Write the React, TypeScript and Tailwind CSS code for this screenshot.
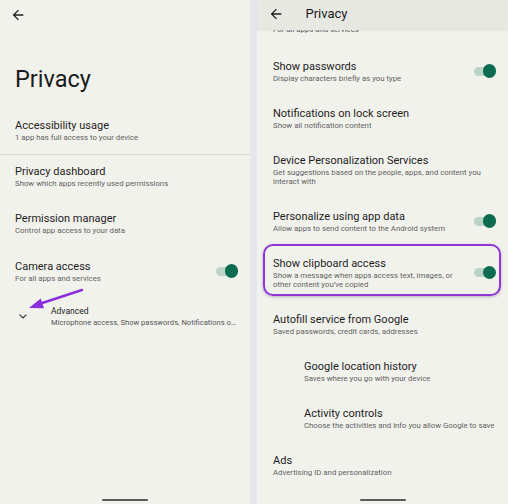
import React from 'react';

const FONT = "font-['Roboto',sans-serif]";

function BackArrow(): JSX.Element {
  return (
    <svg width="16" height="16" viewBox="0 0 24 24" fill="#1f1f1f">
      <path d="M20 11H7.83l5.59-5.59L12 4l-8 8 8 8 1.41-1.41L7.83 13H20v-2z" />
    </svg>
  );
}

function Toggle(): JSX.Element {
  return (
    <div className="relative w-[22px] h-[14px] shrink-0">
      <div className="absolute left-0 top-[2.5px] w-[17px] h-[9px] rounded-full bg-[#bcd3c7]" />
      <div className="absolute right-0 top-0 w-[13.5px] h-[13.5px] rounded-full bg-[#0d6b50]" />
    </div>
  );
}

type RowProps = {
  title: string;
  sub: string[];
  toggle?: boolean;
  className?: string;
  children?: React.ReactNode;
};

function Row({ title, sub, toggle, className = '', children }: RowProps): JSX.Element {
  return (
    <div className={`relative flex items-center pr-[12px] ${className}`}>
      <div className="flex-1 min-w-0">
        <div className="text-[11px] leading-[14px] text-[#1d1d1d]">{title}</div>
        {sub.map((line) => (
          <div key={line} className="text-[7.8px] leading-[9px] text-[#626262] whitespace-nowrap">
            {line}
          </div>
        ))}
      </div>
      {toggle && <Toggle />}
      {children}
    </div>
  );
}

function HomeBar({ className = '' }: { className?: string }): JSX.Element {
  return <div className={`absolute bottom-[3px] h-[2.5px] w-[46px] rounded-full bg-[#5b5b5b] ${className}`} />;
}

function LeftScreen(): JSX.Element {
  return (
    <div className="relative w-[250px] h-[504px] shrink-0 bg-[#f2f2ed] flex flex-col">
      <div className="pt-[6.7px] pl-[10px]">
        <BackArrow />
      </div>
      <div className="mt-[42px] pl-[15px] text-[23.5px] leading-[28px] text-[#1b1b1b]">Privacy</div>

      <Row className="mt-[14.3px] pl-[15px] pt-[12px] pb-[12.4px]" title="Accessibility usage" sub={['1 app has full access to your device']} />
      <div className="h-px bg-[#dadad5]" />
      <Row className="pl-[15px] pt-[9.2px] pb-[12.25px]" title="Privacy dashboard" sub={['Show which apps recently used permissions']} />
      <Row className="pl-[15px] py-[12.25px]" title="Permission manager" sub={['Control app access to your data']} />
      <Row className="pl-[15px] py-[12.25px]" title="Camera access" sub={['For all apps and services']} toggle />

      <div className="mt-[11px] flex items-center">
        <div className="w-[51px] pl-[19px]">
          <svg width="8" height="5" viewBox="0 0 8 5" fill="none" stroke="#333" strokeWidth="1.2">
            <path d="M0.6 0.6 4 4 7.4 0.6" />
          </svg>
        </div>
        <div>
          <div className="text-[8.5px] leading-[10px] text-[#222]">Advanced</div>
          <div className="mt-[2px] text-[7.6px] leading-[9px] text-[#555] whitespace-nowrap">
            Microphone access, Show passwords, Notifications o…
          </div>
        </div>
      </div>

      <svg className="absolute left-0 top-0 pointer-events-none" width="250" height="504">
        <line x1="82" y1="290" x2="40" y2="303.8" stroke="#8a2fdc" strokeWidth="2.5" strokeLinecap="round" />
        <polygon points="29,308 40.7,298.6 44,308.3" fill="#8a2fdc" />
      </svg>

      <HomeBar className="left-[102px]" />
    </div>
  );
}

function RightScreen(): JSX.Element {
  return (
    <div className="relative w-[251px] h-[504px] shrink-0 bg-[#f2f2ed] flex flex-col">
      <div className="h-[30px] shrink-0 bg-[#e8e8e3] flex items-start pt-[5.5px] pl-[11px] shadow-[0_1px_2px_rgba(0,0,0,0.06)] z-10">
        <BackArrow />
        <div className="ml-[21.5px] text-[13px] leading-[16px] text-[#1b1b1b]">Privacy</div>
      </div>

      <div className="flex-1 overflow-hidden flex flex-col">
        <div className="mt-[-5.5px] mb-[14.2px] pl-[16px] text-[7.8px] leading-[9px] text-[#626262]">
          For all apps and services
        </div>
        <Row className="pl-[16px] py-[12px]" title="Show passwords" sub={['Display characters briefly as you type']} toggle />
        <Row className="pl-[16px] py-[12px]" title="Notifications on lock screen" sub={['Show all notification content']} />
        <Row
          className="pl-[16px] py-[12px]"
          title="Device Personalization Services"
          sub={['Get suggestions based on the people, apps, and content you', 'interact with']}
        />
        <Row className="pl-[16px] py-[12px]" title="Personalize using app data" sub={['Allow apps to send content to the Android system']} toggle />
        <Row
          className="pl-[16px] py-[12px]"
          title="Show clipboard access"
          sub={['Show a message when apps access text, images, or', 'other content you’ve copied']}
          toggle
        >
          <div className="absolute left-[6.3px] right-[7.3px] top-[-0.7px] h-[52px] rounded-[10px] border-2 border-[#9035d8] shadow-[0_1px_3px_rgba(80,40,120,0.35)] pointer-events-none" />
        </Row>
        <Row className="pl-[16px] py-[12px]" title="Autofill service from Google" sub={['Saved passwords, credit cards, addresses']} />
        <Row className="pl-[47px] py-[12px]" title="Google location history" sub={['Saves where you go with your device']} />
        <Row className="pl-[47px] py-[12px]" title="Activity controls" sub={['Choose the activities and info you allow Google to save']} />
        <Row className="pl-[16px] py-[12px]" title="Ads" sub={['Advertising ID and personalization']} />
      </div>

      <HomeBar className="left-[103px]" />
    </div>
  );
}

export default function App(): JSX.Element {
  return (
    <div className={`${FONT} w-[508px] h-[504px] flex bg-[#e6e6ee] overflow-hidden`}>
      <LeftScreen />
      <div className="w-[7px] shrink-0 bg-[#e6e6ee]" />
      <RightScreen />
    </div>
  );
}
